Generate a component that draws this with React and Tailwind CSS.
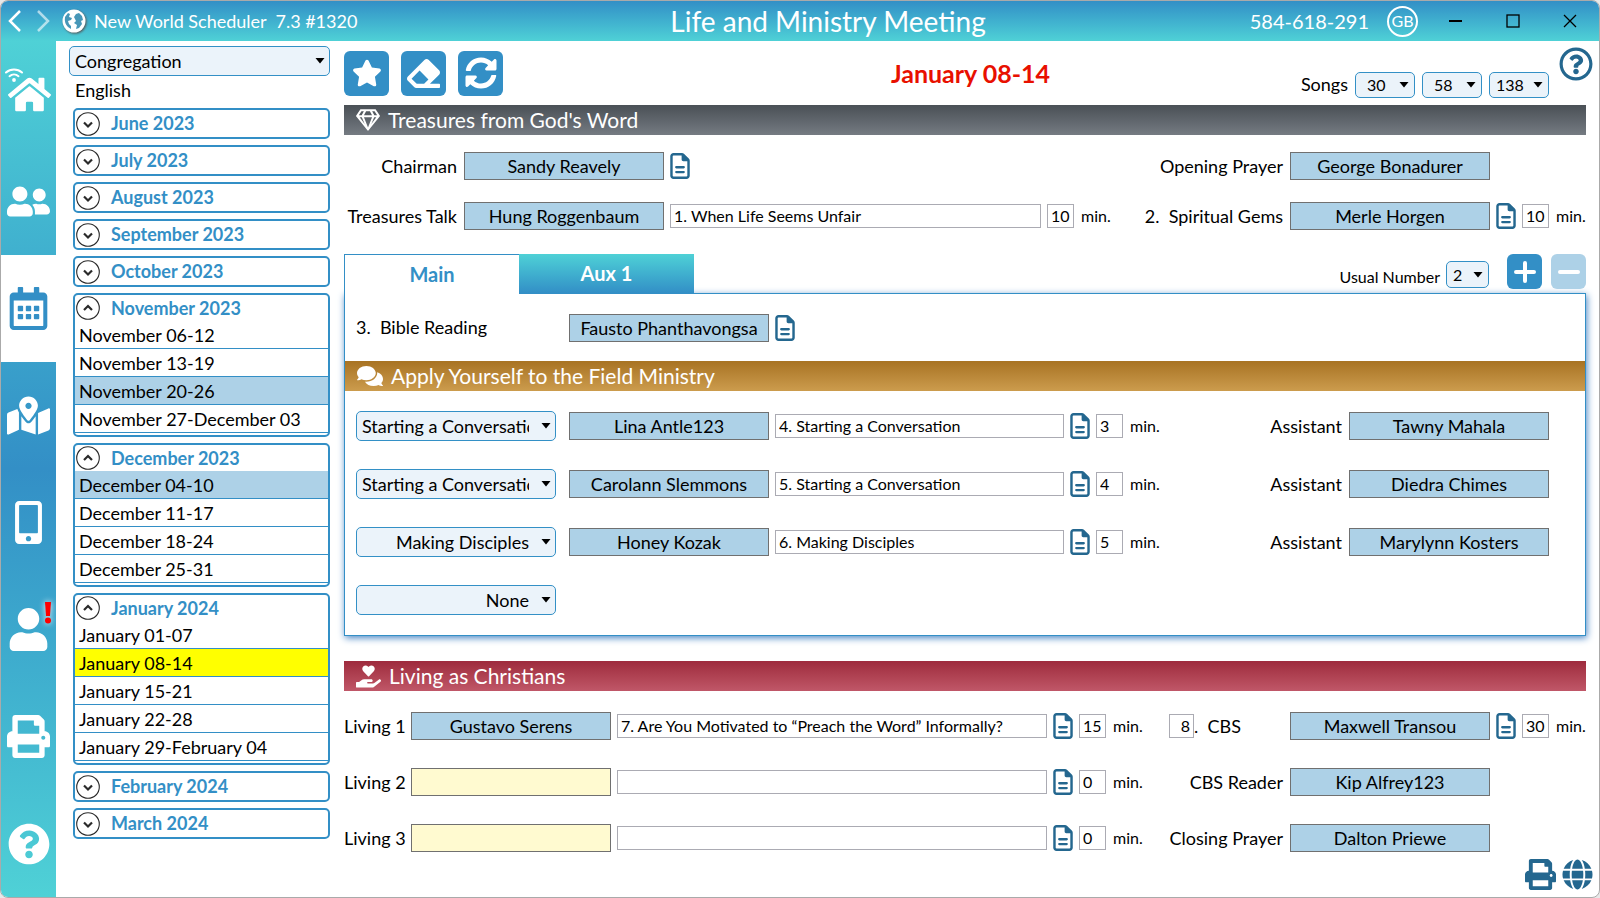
import { useState } from "react";
import {
  FaComments,
  FaEraser,
  FaGlobe,
  FaHandHoldingHeart,
  FaHome,
  FaMapMarkedAlt,
  FaMobileAlt,
  FaPrint,
  FaQuestionCircle,
  FaRegCalendarAlt,
  FaRegGem,
  FaRegQuestionCircle,
  FaStar,
  FaSyncAlt,
  FaUser,
  FaUserFriends,
} from "react-icons/fa";
import { FaRegFileLines } from "react-icons/fa6";

const months = [
  { name: "June 2023" },
  { name: "July 2023" },
  { name: "August 2023" },
  { name: "September 2023" },
  { name: "October 2023" },
  {
    name: "November 2023",
    weeks: ["November 06-12", "November 13-19", "November 20-26", "November 27-December 03"],
  },
  {
    name: "December 2023",
    weeks: ["December 04-10", "December 11-17", "December 18-24", "December 25-31"],
  },
  {
    name: "January 2024",
    weeks: ["January 01-07", "January 08-14", "January 15-21", "January 22-28", "January 29-February 04"],
  },
  { name: "February 2024" },
  { name: "March 2024" },
];

const specialWeeks = ["November 20-26", "December 04-10"];

const ministryParts = [
  { type: "Starting a Conversation", name: "Lina Antle123", title: "4. Starting a Conversation", min: "3", assistant: "Tawny Mahala" },
  { type: "Starting a Conversation", name: "Carolann Slemmons", title: "5. Starting a Conversation", min: "4", assistant: "Diedra Chimes" },
  { type: "Making Disciples", name: "Honey Kozak", title: "6. Making Disciples", min: "5", assistant: "Marylynn Kosters" },
];

const Dropdown = ({ label, value, options = [], className, caret = "right-2" }) => (
  <div className="relative flex shrink-0">
    <select
      aria-label={label}
      defaultValue={value}
      className={`appearance-none rounded-[5px] border border-[#3390c6] bg-[#ebf3fa] outline-none ${className}`}
    >
      {[value, ...options].map((o) => (
        <option key={o}>{o}</option>
      ))}
    </select>
    <svg viewBox="0 0 10 6" className={`pointer-events-none absolute top-1/2 h-[6px] w-[10px] -translate-y-1/2 ${caret}`}>
      <path d="M0.500 0h9L5 5.500z" />
    </svg>
  </div>
);

const NameButton = ({ children, label }) => (
  <button
    aria-label={label}
    className={`h-7 w-[200px] shrink-0 border border-[#707070] text-center leading-6 ${
      children ? "bg-[#add1e7]" : "bg-[#fffad0]"
    }`}
  >
    {children}
  </button>
);

const NoteButton = () => (
  <button aria-label="Notes" className="shrink-0 text-[#24678f]">
    <FaRegFileLines className="h-[26px] w-5" />
  </button>
);

const TitleInput = ({ value = "", label }) => (
  <input
    aria-label={label}
    defaultValue={value}
    className="h-6 min-w-0 flex-1 border border-[#ababb3] bg-white px-[3px] text-[16px] outline-none"
  />
);

const Minutes = ({ value }) => (
  <label className="flex shrink-0 items-center gap-[7px] text-[16px]">
    <input
      aria-label="Minutes"
      defaultValue={value}
      className="h-6 w-[27px] border border-[#ababb3] bg-white px-[3px] text-[16px] outline-none"
    />
    <span className="w-[30px]">min.</span>
  </label>
);

const SectionBar = ({ icon, title, className }) => (
  <h2 className={`flex h-[30px] items-center gap-2 pl-3 text-[21px] text-white ${className}`}>
    {icon}
    {title}
  </h2>
);

const Chevron = ({ open }) => (
  <svg viewBox="0 0 24 24" fill="none" stroke="#2b2b2b" className="h-6 w-6">
    <circle cx="12" cy="12" r="11.300" strokeWidth="1.100" />
    <path d={open ? "M8 14l4-4 4 4" : "M8 10.500l4 4 4-4"} strokeWidth="2.200" />
  </svg>
);

const HomeIcon = () => (
  <svg viewBox="0 0 48 54" className="h-[54px] w-12" fill="none">
    <g stroke="white" strokeWidth="2" strokeLinecap="round">
      <path d="M1 4.500a12 12 0 0 1 16 0" />
      <path d="M4.500 8.200a7 7 0 0 1 9 0" />
    </g>
    <circle cx="9" cy="12" r="1.900" fill="white" />
    <FaHome x="3" y="5" size={43} color="white" />
  </svg>
);

const LogoIcon = () => (
  <svg viewBox="0 0 24 24" className="ml-3 size-6 drop-shadow-[1px_1px_1px_#555]">
    <circle cx="12" cy="12" r="11.500" fill="white" />
    <g fill="#4797b8">
      <path d="M3 8l3-4 2 1-1 3 3 1-1 2-3 1 1 3 2 2v3l-3-2q-4-4-3-10z" />
      <path d="M12 8l2-3 3-1 3 3 1 4-2 1 1 3-3 4-3 1 1-4-3-2 2-2z" />
    </g>
  </svg>
);

const Sidebar = () => {
  const items = [
    { label: "Home", icon: <HomeIcon /> },
    { label: "Publishers", icon: <FaUserFriends className="size-[43px]" /> },
    { label: "Meetings", icon: <FaRegCalendarAlt className="size-[43px]" />, active: true },
    { label: "Territories", icon: <FaMapMarkedAlt className="size-[43px]" /> },
    { label: "Mobile", icon: <FaMobileAlt className="size-[43px]" /> },
    { label: "Account", icon: <FaUser className="size-[43px]" />, alert: true },
    { label: "Print", icon: <FaPrint className="size-[43px]" /> },
    { label: "Help", icon: <FaQuestionCircle className="size-[42px]" /> },
  ];
  return (
    <nav className="flex w-[55px] shrink-0 flex-col bg-linear-to-b from-[#4fd1d6] via-[#338fc6] to-[#4fd1d6]">
      {items.map((item) => (
        <button
          key={item.label}
          aria-label={item.label}
          className={`relative flex h-[107px] w-full items-center justify-center ${
            item.active ? "bg-white text-[#338fc6]" : "text-white"
          }`}
        >
          {item.icon}
          {item.alert && (
            <svg
              viewBox="0 0 8 22"
              className="absolute right-1 top-[26px] h-[22px] w-2 drop-shadow-[0_0_3px_white]"
            >
              <path d="M1 0h6l-1 14H2z" fill="red" />
              <circle cx="4" cy="18.500" r="3" fill="red" />
            </svg>
          )}
        </button>
      ))}
    </nav>
  );
};

const MonthList = ({ selected, onSelect }) => (
  <aside className="flex w-[276px] shrink-0 flex-col pl-[13px] pr-0.5">
    <div className="mt-[5px]">
      <Dropdown label="Group" value="Congregation" className="h-[30px] w-[261px] px-[5px]" caret="right-[5px]" />
    </div>
    <p className="mb-1 flex h-7 items-center pl-1.5">English</p>
    <div className="flex w-[257px] flex-col gap-1.5 self-end">
      {months.map((m) => (
        <section key={m.name} className={`rounded-[5px] border-2 border-[#338fc6] ${m.weeks ? "pb-0.5" : ""}`}>
          <button
            className={`flex w-full items-center gap-[11px] pl-px font-bold text-[#338fc6] ${m.weeks ? "h-[26px]" : "h-[27px]"}`}
          >
            <Chevron open={!!m.weeks} />
            {m.name}
          </button>
          {m.weeks?.map((w) => (
            <button
              key={w}
              onClick={() => onSelect(w)}
              className={`block h-7 w-full border-b border-[#338fc6] pl-1 text-left leading-6 ${
                w === selected ? "bg-[#ffff00]" : specialWeeks.includes(w) ? "bg-[#add1e7]" : "bg-white"
              }`}
            >
              {w}
            </button>
          ))}
        </section>
      ))}
    </div>
  </aside>
);

const TitleBar = () => (
  <header className="flex h-10 shrink-0 items-center bg-linear-to-b from-[#338fc6] to-[#4fd1d6] text-white">
    <div className="flex flex-1 items-center">
      <svg viewBox="0 0 42 22" fill="none" stroke="white" strokeWidth="2.500" className="ml-[7px] h-[22px] w-[42px]">
        <path d="M12 1L2 11l10 10" />
        <path d="M30 1l10 10-10 10" opacity="0.6" />
      </svg>
      <LogoIcon />
      <span className="ml-2 text-[18px]">New World Scheduler&nbsp; 7.3 #1320</span>
    </div>
    <h1 className="pl-14 text-[28px]">Life and Ministry Meeting</h1>
    <div className="flex flex-1 items-center justify-end">
      <span className="text-[20px]">584-618-291</span>
      <span className="ml-[18px] flex size-[31px] items-center justify-center rounded-full border-2 border-white text-[16px]">GB</span>
      <svg viewBox="0 0 128 14" fill="none" stroke="black" strokeWidth="1.300" className="ml-[31px] mr-[22px] h-[14px] w-32">
        <path d="M0 7h13" strokeWidth="2" />
        <rect x="58" y="1" width="12" height="12" />
        <path d="M115 1l12 12M127 1l-12 12" />
      </svg>
    </div>
  </header>
);

export default function App() {
  const [week, setWeek] = useState("January 08-14");

  return (
    <div className="min-h-screen bg-[#e8e8e8] font-[Lato,sans-serif] text-[18px] text-black">
      <div className="flex min-h-screen flex-col overflow-hidden rounded-lg border border-[#aaaaaa] bg-white">
        <TitleBar />
        <div className="flex flex-1">
          <Sidebar />
          <MonthList selected={week} onSelect={setWeek} />

          <main className="flex min-w-0 flex-1 flex-col pl-3">
            {/* Toolbar */}
            <div className="flex h-16">
              <div className="flex flex-1 items-center gap-3">
                <button aria-label="Favorite" className="flex size-[45px] items-center justify-center rounded-md bg-[#338fc6] text-white">
                  <FaStar className="size-[30px]" />
                </button>
                <button aria-label="Clear" className="flex size-[45px] items-center justify-center rounded-md bg-[#338fc6] text-white">
                  <FaEraser className="size-[33px]" />
                </button>
                <button aria-label="Refresh" className="flex size-[45px] items-center justify-center rounded-md bg-[#338fc6] text-white">
                  <FaSyncAlt className="size-[32px]" />
                </button>
              </div>
              <h2 className="pl-1 pt-3.5 text-[25px] font-bold text-[#e81000]">{week}</h2>
              <div className="flex flex-1 justify-end pr-1.5">
                <div className="flex items-end gap-[7px] pb-[7px]">
                  <span>Songs</span>
                  <Dropdown label="Opening song" value="30" className="h-[26px] w-[60px] pl-[11px] text-[16px]" caret="right-1.5" />
                  <Dropdown label="Middle song" value="58" className="h-[26px] w-[60px] pl-[11px] text-[16px]" caret="right-1.5" />
                  <Dropdown label="Closing song" value="138" className="h-[26px] w-[60px] pl-1.5 text-[16px]" caret="right-1.5" />
                </div>
                <button aria-label="Help" className="ml-2.5 mt-1.5 self-start text-[#24678f]">
                  <FaRegQuestionCircle className="size-[34px]" />
                </button>
              </div>
            </div>

            <div className="pr-[13px]">
              {/* Treasures */}
              <SectionBar
                title="Treasures from God's Word"
                icon={<FaRegGem className="size-6" />}
                className="bg-linear-to-b from-[#4a5056] to-[#757b82]"
              />
              <div className="mt-1.5 flex h-[50px] items-center gap-1.5">
                <span className="w-[114px] whitespace-nowrap pr-px text-right">Chairman</span>
                <NameButton>Sandy Reavely</NameButton>
                <NoteButton />
                <div className="flex flex-1 items-center justify-end gap-[7px] pr-24">
                  <span>Opening Prayer</span>
                  <NameButton>George Bonadurer</NameButton>
                </div>
              </div>
              <div className="flex h-[50px] items-center gap-1.5">
                <span className="w-[114px] whitespace-nowrap pr-px text-right">Treasures Talk</span>
                <NameButton>Hung Roggenbaum</NameButton>
                <TitleInput label="Treasures talk title" value="1. When Life Seems Unfair" />
                <Minutes value="10" />
                <div className="flex w-[469px] items-center justify-end gap-1.5">
                  <span className="pr-px">2.&nbsp; Spiritual Gems</span>
                  <NameButton>Merle Horgen</NameButton>
                  <NoteButton />
                  <Minutes value="10" />
                </div>
              </div>

              {/* Hall tabs */}
              <div className="mt-[13px] flex h-[39px]">
                <button className="z-10 h-10 w-[175px] border-l border-t border-[#338fc6] bg-white pb-0.5 text-[20px] font-bold text-[#338fc6]">
                  Main
                </button>
                <button className="w-[175px] bg-linear-to-b from-[#4fd1d6] to-[#338fc6] pb-0.5 text-[20px] font-bold text-white">
                  Aux 1
                </button>
                <div className="flex flex-1 items-start justify-end">
                  <span className="mr-1.5 self-end pb-1 text-[16px]">Usual Number</span>
                  <div className="self-end pb-[5px]">
                    <Dropdown label="Usual Number" value="2" className="h-[27px] w-[43px] pl-1.5 text-[16px]" caret="right-1.5" />
                  </div>
                  <button aria-label="Add part" className="ml-[18px] flex size-[35px] items-center justify-center rounded-md bg-[#338fc6]">
                    <svg viewBox="0 0 22 22" stroke="white" strokeWidth="4" strokeLinecap="round" className="size-[22px]">
                      <path d="M2 11h18M11 2v18" />
                    </svg>
                  </button>
                  <button aria-label="Remove part" className="ml-[9px] flex size-[35px] items-center justify-center rounded-md bg-[#add1e7]">
                    <svg viewBox="0 0 22 22" stroke="white" strokeWidth="4" strokeLinecap="round" className="size-[22px]">
                      <path d="M2 11h18" />
                    </svg>
                  </button>
                </div>
              </div>

              <div className="border border-[#338fc6] pb-1.5 shadow-[1px_2px_7px_#4a86c4]">
                <div className="flex h-[67px] items-center pl-[11px]">
                  <span className="w-[213px]">3.&nbsp; Bible Reading</span>
                  <NameButton>Fausto Phanthavongsa</NameButton>
                  <div className="ml-1.5 flex">
                    <NoteButton />
                  </div>
                </div>
                <SectionBar
                  title="Apply Yourself to the Field Ministry"
                  icon={<FaComments className="size-[26px]" />}
                  className="bg-linear-to-b from-[#a87322] to-[#cc9c4d]"
                />
                <div className="pt-1.5">
                  {ministryParts.map((p) => (
                    <div key={p.title} className="flex h-[58px] items-center gap-1.5 pl-[11px] pr-9">
                      <div className="mr-[7px]">
                        <Dropdown
                          label="Part type"
                          value={p.type}
                          className={`h-[30px] w-[200px] pl-[5px] pr-[26px] ${p.type === "Making Disciples" ? "text-right" : "text-left"}`}
                          caret="right-[5px]"
                        />
                      </div>
                      <NameButton>{p.name}</NameButton>
                      <TitleInput label="Part title" value={p.title} />
                      <NoteButton />
                      <Minutes value={p.min} />
                      <div className="flex w-[383px] items-center justify-end gap-[7px]">
                        <span>Assistant</span>
                        <NameButton>{p.assistant}</NameButton>
                      </div>
                    </div>
                  ))}
                  <div className="flex h-[58px] items-center pl-[11px]">
                    <Dropdown label="Part type" value="None" className="h-[30px] w-[200px] pl-[5px] pr-[26px] text-right" caret="right-[5px]" />
                  </div>
                </div>
              </div>

              {/* Living */}
              <div className="pt-[25px]">
                <SectionBar
                  title="Living as Christians"
                  icon={<FaHandHoldingHeart className="size-[25px]" />}
                  className="bg-linear-to-b from-[#9e2a3d] to-[#c05768]"
                />
              </div>
              <div className="pt-[7px]">
                <div className="flex h-14 items-center gap-1.5">
                  <span className="w-[61px] whitespace-nowrap">Living 1</span>
                  <NameButton>Gustavo Serens</NameButton>
                  <TitleInput label="Living 1 title" value="7. Are You Motivated to “Preach the Word” Informally?" />
                  <NoteButton />
                  <Minutes value="15" />
                  <div className="flex w-[437px] items-center gap-1.5">
                    <label className="ml-5 flex flex-1 items-center">
                      <input
                        aria-label="CBS number"
                        defaultValue="8"
                        className="h-6 w-[25px] border border-[#ababb3] px-[3px] text-right text-[16px] outline-none"
                      />
                      .&nbsp; CBS
                    </label>
                    <NameButton>Maxwell Transou</NameButton>
                    <NoteButton />
                    <Minutes value="30" />
                  </div>
                </div>
                {[
                  { part: "Living 2", label: "CBS Reader", name: "Kip Alfrey123" },
                  { part: "Living 3", label: "Closing Prayer", name: "Dalton Priewe" },
                ].map((r) => (
                  <div key={r.part} className="flex h-14 items-center gap-1.5">
                    <span className="w-[61px] whitespace-nowrap">{r.part}</span>
                    <NameButton label={r.part} />
                    <TitleInput label={`${r.part} title`} />
                    <NoteButton />
                    <Minutes value="0" />
                    <div className="flex w-[437px] items-center justify-end gap-[7px] pr-24">
                      <span>{r.label}</span>
                      <NameButton>{r.name}</NameButton>
                    </div>
                  </div>
                ))}
              </div>
            </div>

            <div className="-mt-4 flex flex-1 items-end justify-end gap-1.5 pb-[7px] pr-1.5 text-[#24678f]">
              <button aria-label="Print">
                <FaPrint className="size-[31px]" />
              </button>
              <button aria-label="Web">
                <FaGlobe className="size-[31px]" />
              </button>
            </div>
          </main>
        </div>
      </div>
    </div>
  );
}
